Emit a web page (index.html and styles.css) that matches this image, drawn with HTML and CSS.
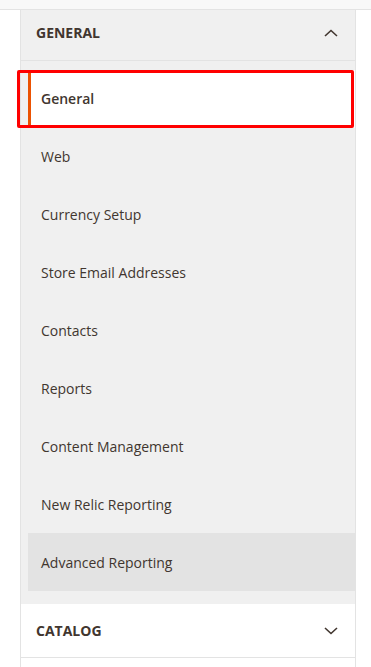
FILE: index.html
```html
<!DOCTYPE html>
<html lang="en">
  <head>
    <meta charset="utf-8">
    <title>Configuration</title>
    <link rel="stylesheet" href="styles.css">
  </head>
  <body>
    <div class="topbar"></div>

    <div class="config-nav">
      <section class="config-tab open">
        <div class="tab-title">
          <span>General</span>
          <svg class="chevron" width="14" height="8" viewBox="0 0 14 8"><path d="M1 7 L7 1.5 L13 7" fill="none" stroke="#41362f" stroke-width="1.6"/></svg>
        </div>
        <ul class="tab-items">
          <li class="item active"><span class="highlight"></span>General</li>
          <li class="item">Web</li>
          <li class="item">Currency Setup</li>
          <li class="item">Store Email Addresses</li>
          <li class="item">Contacts</li>
          <li class="item">Reports</li>
          <li class="item">Content Management</li>
          <li class="item">New Relic Reporting</li>
          <li class="item hover">Advanced Reporting</li>
        </ul>
      </section>

      <section class="config-tab">
        <div class="tab-title">
          <span>Catalog</span>
          <svg class="chevron" width="14" height="8" viewBox="0 0 14 8"><path d="M1 1 L7 6.5 L13 1" fill="none" stroke="#41362f" stroke-width="1.6"/></svg>
        </div>
      </section>

      <section class="config-tab"></section>
    </div>
  </body>
</html>
```

FILE: styles.css
```css
body {
  margin: 0;
  font-family: "Open Sans", sans-serif;
  background: #ffffff;
  color: #41362f;
}
.topbar {
  height: 9px;
  background: #f8f8f8;
  border-bottom: 1px solid #e3e3e3;
}
.config-nav {
  margin-left: 20px;
  width: 334px;
  border-left: 1px solid #e3e3e3;
  border-right: 1px solid #e3e3e3;
}
.config-tab {
  background: #ffffff;
}
.config-tab.open {
  background: #f0f0f0;
}
.tab-title {
  display: flex;
  align-items: center;
  justify-content: space-between;
  height: 53px;
  padding: 0 17px 0 15px;
  border-bottom: 1px solid #e3e3e3;
  font-size: 14px;
  font-weight: 700;
  text-transform: uppercase;
}
.open .tab-title {
  height: 45px;
  padding-bottom: 5px;
}
.chevron {
  display: block;
}
.tab-items {
  list-style: none;
  margin: 0;
  padding: 9px 0 13px 7px;
}
.item {
  position: relative;
  display: flex;
  align-items: center;
  height: 57.9px;
  padding-left: 13px;
  font-size: 14px;
}
.item.active {
  background: #ffffff;
  border-left: 3px solid #eb5202;
  padding-left: 10px;
  font-weight: 600;
}
.item.hover {
  background: #e3e3e3;
}
.highlight {
  position: absolute;
  top: 0;
  bottom: 0;
  left: -14px;
  right: 1px;
  border: 3px solid #ff0000;
  border-radius: 2px;
}
.config-tab:last-child {
  height: 10px;
}
```
